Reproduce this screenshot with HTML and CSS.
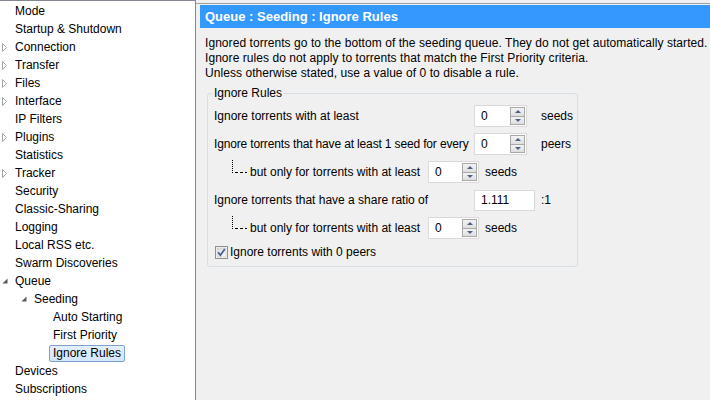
FILE: index.html
```html
<!DOCTYPE html>
<html>
<head>
<meta charset="utf-8">
<link rel="stylesheet" href="styles.css">
</head>
<body>
<div class="tree">
  <div class="row l0"><span class="exp"></span>Mode</div>
  <div class="row l0"><span class="exp"></span>Startup &amp; Shutdown</div>
  <div class="row l0"><span class="exp"><svg width="6" height="9" viewBox="0 0 6 9"><polygon points="0.5,0.5 4.5,4.5 0.5,8.5" fill="#fff" stroke="#a6a6a6"/></svg></span>Connection</div>
  <div class="row l0"><span class="exp"><svg width="6" height="9" viewBox="0 0 6 9"><polygon points="0.5,0.5 4.5,4.5 0.5,8.5" fill="#fff" stroke="#a6a6a6"/></svg></span>Transfer</div>
  <div class="row l0"><span class="exp"><svg width="6" height="9" viewBox="0 0 6 9"><polygon points="0.5,0.5 4.5,4.5 0.5,8.5" fill="#fff" stroke="#a6a6a6"/></svg></span>Files</div>
  <div class="row l0"><span class="exp"><svg width="6" height="9" viewBox="0 0 6 9"><polygon points="0.5,0.5 4.5,4.5 0.5,8.5" fill="#fff" stroke="#a6a6a6"/></svg></span>Interface</div>
  <div class="row l0"><span class="exp"></span>IP Filters</div>
  <div class="row l0"><span class="exp"><svg width="6" height="9" viewBox="0 0 6 9"><polygon points="0.5,0.5 4.5,4.5 0.5,8.5" fill="#fff" stroke="#a6a6a6"/></svg></span>Plugins</div>
  <div class="row l0"><span class="exp"></span>Statistics</div>
  <div class="row l0"><span class="exp"><svg width="6" height="9" viewBox="0 0 6 9"><polygon points="0.5,0.5 4.5,4.5 0.5,8.5" fill="#fff" stroke="#a6a6a6"/></svg></span>Tracker</div>
  <div class="row l0"><span class="exp"></span>Security</div>
  <div class="row l0"><span class="exp"></span>Classic-Sharing</div>
  <div class="row l0"><span class="exp"></span>Logging</div>
  <div class="row l0"><span class="exp"></span>Local RSS etc.</div>
  <div class="row l0"><span class="exp"></span>Swarm Discoveries</div>
  <div class="row l0"><span class="exp"><svg width="6" height="6" viewBox="0 0 6 6"><polygon points="5.5,0.5 5.5,5.5 0.5,5.5" fill="#595959"/></svg></span>Queue</div>
  <div class="row l1"><span class="exp"><svg width="6" height="6" viewBox="0 0 6 6"><polygon points="5.5,0.5 5.5,5.5 0.5,5.5" fill="#595959"/></svg></span>Seeding</div>
  <div class="row l2"><span class="exp"></span>Auto Starting</div>
  <div class="row l2"><span class="exp"></span>First Priority</div>
  <div class="row l2"><span class="exp"></span><span class="sel">Ignore Rules</span></div>
  <div class="row l0"><span class="exp"></span>Devices</div>
  <div class="row l0"><span class="exp"></span>Subscriptions</div>
</div>

<div class="content">
  <div class="header">Queue : Seeding : Ignore Rules</div>
  <div class="desc">
    <div>Ignored torrents go to the bottom of the seeding queue. They do not get automatically started.</div>
    <div>Ignore rules do not apply to torrents that match the First Priority criteria.</div>
    <div>Unless otherwise stated, use a value of 0 to disable a rule.</div>
  </div>

  <fieldset class="group">
    <legend>Ignore Rules</legend>

    <div class="frow">
      <span class="lbl">Ignore torrents with at least</span>
      <span class="spin"><span class="val">0</span><span class="btns"><span class="btn up"></span><span class="btn down"></span></span></span>
      <span class="unit">seeds</span>
    </div>

    <div class="frow">
      <span class="lbl tight">Ignore torrents that have at least 1 seed for every</span>
      <span class="spin"><span class="val">0</span><span class="btns"><span class="btn up"></span><span class="btn down"></span></span></span>
      <span class="unit">peers</span>
    </div>

    <div class="frow sub">
      <svg class="conn" width="15" height="14" viewBox="0 0 15 14"><line x1="0.5" y1="0" x2="0.5" y2="13" stroke="#000" stroke-dasharray="1,1"/><line x1="3" y1="12.5" x2="15" y2="12.5" stroke="#000" stroke-dasharray="3,2"/></svg>
      <span class="lbl2">but only for torrents with at least</span>
      <span class="spin small"><span class="val">0</span><span class="btns"><span class="btn up"></span><span class="btn down"></span></span></span>
      <span class="unit">seeds</span>
    </div>

    <div class="frow">
      <span class="lbl">Ignore torrents that have a share ratio of</span>
      <span class="field">1.111</span>
      <span class="unit ratio">:1</span>
    </div>

    <div class="frow sub">
      <svg class="conn" width="15" height="14" viewBox="0 0 15 14"><line x1="0.5" y1="0" x2="0.5" y2="13" stroke="#000" stroke-dasharray="1,1"/><line x1="3" y1="12.5" x2="15" y2="12.5" stroke="#000" stroke-dasharray="3,2"/></svg>
      <span class="lbl2">but only for torrents with at least</span>
      <span class="spin small"><span class="val">0</span><span class="btns"><span class="btn up"></span><span class="btn down"></span></span></span>
      <span class="unit">seeds</span>
    </div>

    <div class="crow">
      <svg class="cb" width="13" height="13" viewBox="0 0 13 13">
        <defs><linearGradient id="g" x1="0" y1="0" x2="1" y2="1"><stop offset="0" stop-color="#dcdcdc"/><stop offset="1" stop-color="#fbfbfb"/></linearGradient></defs>
        <rect x="0.5" y="0.5" width="12" height="12" fill="#fff" stroke="#8e8f8f"/>
        <rect x="2" y="2" width="9" height="9" fill="url(#g)" stroke="#bdbdbd" stroke-width="0.6"/>
        <path d="M3.2 6.4 L5.4 9.2 L9.8 3" fill="none" stroke="#4a5f97" stroke-width="1.8"/>
      </svg>
      <span>Ignore torrents with 0 peers</span>
    </div>
  </fieldset>
</div>
</body>
</html>
```

FILE: styles.css
```css
html, body {
  margin: 0;
  padding: 0;
}
body {
  width: 710px;
  height: 400px;
  overflow: hidden;
  display: flex;
  background: #f0f0f0;
  font-family: "Liberation Sans", Arial, sans-serif;
  font-size: 12px;
  color: #000;
}
.tree {
  width: 195px;
  flex: none;
  background: #fff;
  border-top: 1px solid #828790;
  border-right: 1px solid #828790;
  padding-top: 1px;
  height: 398px;
  overflow: hidden;
}
.row {
  height: 18px;
  line-height: 18px;
  display: flex;
  align-items: center;
  white-space: nowrap;
}
.l0 { padding-left: 2px; }
.l1 { padding-left: 21px; }
.l2 { padding-left: 40px; }
.exp {
  width: 13px;
  flex: none;
  display: flex;
  align-items: center;
}
.exp svg { display: block; }
.sel {
  margin-left: -4px;
  padding: 0 3px;
  line-height: 15px;
  border: 1px solid #7da2ce;
  border-radius: 2px;
  background: linear-gradient(#e4effc, #d3e5fa);
}
.content {
  flex: 1;
  margin-top: 3px;
  border-top: 1px solid #a0a0a0;
  padding: 1px 0 0 4px;
  min-width: 0;
}
.header {
  height: 23px;
  line-height: 23px;
  background: #3399ff;
  color: #fff;
  font-weight: bold;
  font-size: 13px;
  padding-left: 5px;
  white-space: nowrap;
}
.desc {
  margin: 8px 0 0 5px;
  line-height: 15px;
  letter-spacing: 0.06px;
  white-space: nowrap;
}
.group {
  margin: 5px 0 0 7px;
  width: 371px;
  box-sizing: border-box;
  border: 1px solid #d5dfe5;
  border-radius: 3px;
  padding: 5px 6px 7px 6px;
  display: flex;
  flex-direction: column;
  gap: 6px;
  min-width: 0;
}
.group legend {
  padding: 0 2px;
  margin-left: -2px;
  line-height: 14px;
}
.frow {
  display: flex;
  align-items: center;
  height: 22px;
  white-space: nowrap;
}
.lbl { width: 260px; flex: none; }
.tight { letter-spacing: -0.15px; }
.sub { padding-left: 18px; }
.conn { flex: none; align-self: flex-start; margin: -1px 3px 0 0; display: block; }
.lbl2 { width: 178px; flex: none; }
.unit { margin-left: 14px; }
.unit.ratio { margin-left: 6px; }
.sub .unit { margin-left: 6px; }
.spin {
  width: 53px;
  height: 22px;
  box-sizing: border-box;
  border: 1px solid #d9d9d9;
  background: #fff;
  display: flex;
  padding: 1px;
  flex: none;
}
.spin.small { width: 51px; }
.val {
  flex: 1;
  padding-left: 5px;
  line-height: 18px;
}
.btns {
  width: 15px;
  display: flex;
  flex-direction: column;
}
.btn {
  flex: 1;
  box-sizing: border-box;
  border: 1px solid #a8a8a8;
  background: linear-gradient(#f4f4f4, #dedede);
  display: flex;
  align-items: center;
  justify-content: center;
}
.btn + .btn { border-top: none; }
.btn::after {
  content: "";
  width: 0;
  height: 0;
  border-left: 3px solid transparent;
  border-right: 3px solid transparent;
}
.up::after { border-bottom: 3px solid #4d6185; }
.down::after { border-top: 3px solid #4d6185; }
.field {
  width: 61px;
  height: 21px;
  box-sizing: border-box;
  border: 1px solid #d9d9d9;
  background: #fff;
  padding-left: 6px;
  line-height: 19px;
  flex: none;
}
.crow {
  display: flex;
  align-items: center;
  height: 14px;
  gap: 2px;
  padding-left: 1px;
  white-space: nowrap;
}
.cb { display: block; flex: none; }
```
